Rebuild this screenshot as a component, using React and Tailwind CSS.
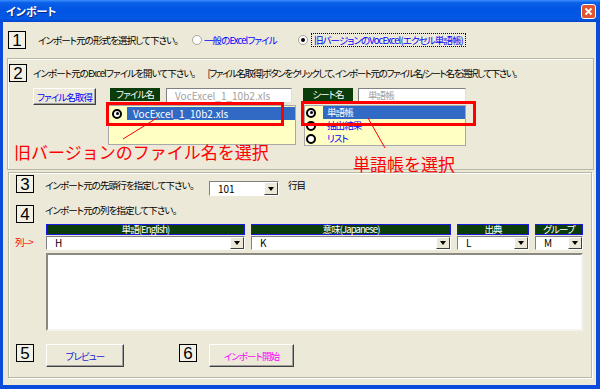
const J = "text-[9.5px] tracking-[-0.9px]";

function Num({ n }) {
  return (
    <div className="w-[18px] h-[18px] shrink-0 border border-black bg-[#f3f1e6] flex items-center justify-center font-['Liberation_Sans',sans-serif] text-[17px] leading-none tracking-normal [font-feature-settings:normal]">
      {n}
    </div>
  );
}

function Radio({ checked }) {
  return (
    <div className="w-[10px] h-[10px] shrink-0 rounded-full bg-white border border-[#a7a69a] flex items-center justify-center">
      {checked && <div className="w-[4px] h-[4px] rounded-full bg-black" />}
    </div>
  );
}

function ListRadio({ checked }) {
  return (
    <div className="w-[10px] h-[10px] shrink-0 rounded-full bg-white border-2 border-black flex items-center justify-center">
      {checked && <div className="w-[3px] h-[3px] rounded-full bg-black" />}
    </div>
  );
}

function DropBtn() {
  return (
    <div className="w-[14px] h-full shrink-0 bg-[#ece9d8] border border-t-white border-l-white border-b-[#404040] border-r-[#404040] flex items-center justify-center">
      <div className="w-0 h-0 border-x-[3px] border-x-transparent border-t-[4px] border-t-black" />
    </div>
  );
}

function Combo({ value, cls }) {
  return (
    <div className={cls}>
      <div className="flex h-full bg-white border border-t-[#808080] border-l-[#808080] border-b-white border-r-white">
        <div className="flex-1 pl-[8px] flex items-center text-[10px] leading-none">{value}</div>
        <DropBtn />
      </div>
    </div>
  );
}

export default function App() {
  return (
    <div className="relative w-[600px] h-[389px] bg-[#0b4bdc] flex flex-col overflow-hidden whitespace-nowrap font-['Noto_Sans_CJK_JP',sans-serif] text-[10px] leading-[14px] text-black [font-feature-settings:'palt']">
      {/* title bar */}
      <div className="h-[22px] shrink-0 flex items-center justify-between pl-[6px] pr-[4px] bg-[linear-gradient(180deg,#3d8ffb_0%,#0b61ea_12%,#0054e3_45%,#0459e4_85%,#0045cc_100%)]">
        <span className="text-white font-bold text-[11px] [text-shadow:1px_1px_0_#0a2a8a]">インポート</span>
        <div className="w-[15px] h-[15px] rounded-[3px] border border-white bg-[#e0552f] flex items-center justify-center">
          <svg width="9" height="9" viewBox="0 0 9 9">
            <path d="M1.5 1.5L7.5 7.5M7.5 1.5L1.5 7.5" stroke="white" strokeWidth="1.8" />
          </svg>
        </div>
      </div>

      {/* body */}
      <div className="flex-1 ml-[3px] mr-[4px] mb-[4px] bg-[#ece9d8] flex flex-col">
        {/* section 1 */}
        <div className="h-[36px] shrink-0 flex items-center pl-[5px]">
          <Num n="1" />
          <span className={`ml-[12px] w-[154px] shrink-0 ${J}`}>インポート元の形式を選択して下さい。</span>
          <Radio />
          <span className={`ml-[2px] w-[94px] shrink-0 text-[#0000ff] ${J}`}>一般のExcelファイル</span>
          <Radio checked />
          <span className={`ml-[3px] border border-dotted border-black px-[2px] leading-[12px] text-[#0000ff] ${J}`}>
            旧バージョンのVocExcel(エクセル単語帳)
          </span>
        </div>

        {/* section 2 */}
        <div className="h-[112px] shrink-0 ml-[4px] mr-[2px] border border-[#b9b6a6] shadow-[inset_1px_1px_0_#fff] flex flex-col pl-[1px] pt-[5px]">
          <div className="flex items-center h-[18px]">
            <Num n="2" />
            <span className={`ml-[6px] ${J}`}>インポート元のExcelファイルを開いて下さい。</span>
            <span className="ml-[12px] text-[9.5px] tracking-[-1.4px]">
              [ファイル名取得]ボタンをクリックして、インポート元のファイル名/シート名を選択して下さい。
            </span>
          </div>
          <div className="flex items-start mt-[6px] pl-[24px]">
            <div className={`w-[63px] h-[17px] shrink-0 bg-[#ece9d8] border border-t-white border-l-white border-b-[#404040] border-r-[#404040] shadow-[inset_-1px_-1px_0_#a0a0a0] flex items-center justify-center text-[#0000ff] ${J}`}>
              ファイル名取得
            </div>
            <div className={`ml-[14px] w-[50px] h-[13px] shrink-0 bg-[#0b3d0b] text-white flex items-center justify-center leading-none ${J}`}>
              ファイル名
            </div>
            <div className="ml-[6px] w-[126px] h-[15px] shrink-0 bg-white border border-t-[#808080] border-l-[#808080] border-b-[#e0e0e0] border-r-[#e0e0e0] pl-[8px] flex items-center text-[#a0a0a0] leading-none">
              VocExcel_1_10b2.xls
            </div>
            <div className={`ml-[11px] w-[50px] h-[13px] shrink-0 bg-[#0b3d0b] text-white flex items-center justify-center leading-none ${J}`}>
              シート名
            </div>
            <div className={`ml-[5px] w-[108px] h-[15px] shrink-0 bg-white border border-t-[#808080] border-l-[#808080] border-b-[#e0e0e0] border-r-[#e0e0e0] pl-[9px] flex items-center text-[#a0a0a0] leading-none ${J}`}>
              単語帳
            </div>
          </div>
          <div className="flex items-start pl-[99px]">
            <div className="w-[188px] h-[40px] shrink-0 bg-[#ffffc4] border border-[#a8a8a8] flex flex-col pt-[1px]">
              <div className="flex items-center h-[13px]">
                <div className="ml-[3px]"><ListRadio checked /></div>
                <div className="ml-[5px] flex-1 h-[13px] bg-[#316ac5] text-white pl-[6px] flex items-center leading-none">
                  VocExcel_1_10b2.xls
                </div>
              </div>
            </div>
            <div className="ml-[8px] w-[162px] h-[41px] shrink-0 bg-[#ffffc4] border border-[#a8a8a8] flex flex-col">
              <div className="flex items-center h-[13px]">
                <div className="ml-[1px]"><ListRadio checked /></div>
                <div className={`ml-[7px] flex-1 h-[13px] bg-[#316ac5] text-white pl-[4px] flex items-center leading-none ${J}`}>単語帳</div>
              </div>
              <div className="flex items-center h-[13px]">
                <div className="ml-[1px]"><ListRadio /></div>
                <div className={`ml-[7px] pl-[4px] text-[#0000ff] leading-none ${J}`}>抽出結果</div>
              </div>
              <div className="flex items-center h-[13px]">
                <div className="ml-[1px]"><ListRadio /></div>
                <div className={`ml-[7px] pl-[4px] text-[#0000ff] leading-none ${J}`}>リスト</div>
              </div>
            </div>
          </div>
        </div>

        {/* section 3 */}
        <div className="mt-[2px] ml-[5px] w-[584px] h-[206px] shrink-0 border border-[#b9b6a6] shadow-[inset_1px_1px_0_#fff,1px_1px_0_#fff] flex flex-col pl-[7px] pt-[2px]">
          <div className="flex items-start h-[30px] shrink-0">
            <Num n="3" />
            <span className={`ml-[11px] w-[164px] shrink-0 mt-[3px] ${J}`}>インポート元の先頭行を指定して下さい。</span>
            <Combo value="101" cls="w-[70px] h-[15px] mt-[6px] shrink-0" />
            <span className={`ml-[9px] mt-[3px] ${J}`}>行目</span>
          </div>
          <div className="flex items-start h-[19px] shrink-0">
            <Num n="4" />
            <span className={`ml-[11px] leading-[12px] -mt-[1px] ${J}`}>インポート元の列を指定して下さい。</span>
          </div>
          <div className="flex ml-[30px] gap-[6px] h-[11px] shrink-0">
            <div className={`w-[199px] h-full bg-[#0b3d0b] border border-[#1a1ae0] text-white flex items-center justify-center leading-none ${J}`}>単語(English)</div>
            <div className={`w-[200px] h-full bg-[#0b3d0b] border border-[#1a1ae0] text-white flex items-center justify-center leading-none ${J}`}>意味(Japanese)</div>
            <div className={`w-[72px] h-full bg-[#0b3d0b] border border-[#1a1ae0] text-white flex items-center justify-center leading-none ${J}`}>出典</div>
            <div className={`w-[48px] h-full bg-[#0b3d0b] border border-[#1a1ae0] text-white flex items-center justify-center leading-none ${J}`}>グループ</div>
          </div>
          <div className="flex items-center mt-[1px] -ml-[1px] h-[14px] shrink-0">
            <span className={`w-[31px] shrink-0 text-[#ff0000] leading-none ${J}`}>列--&gt;</span>
            <div className="flex gap-[6px] h-full">
              <Combo value="H" cls="w-[199px] h-full" />
              <Combo value="K" cls="w-[200px] h-full" />
              <Combo value="L" cls="w-[72px] h-full" />
              <Combo value="M" cls="w-[48px] h-full" />
            </div>
          </div>
          <div className="ml-[30px] mt-[3px] w-[537px] h-[78px] shrink-0 bg-white border-2 border-t-[#8c8a80] border-l-[#8c8a80] border-b-[#f4f3ee] border-r-[#f4f3ee]" />
          <div className="flex items-start mt-[13px] shrink-0">
            <Num n="5" />
            <div className={`ml-[12px] w-[78px] h-[23px] shrink-0 bg-[#ece9d8] border border-t-white border-l-white border-b-[#404040] border-r-[#404040] shadow-[inset_-1px_-1px_0_#a0a0a0] flex items-center justify-center text-[#1a1ad0] ${J}`}>
              プレビュー
            </div>
            <div className="ml-[55px]"><Num n="6" /></div>
            <div className={`ml-[12px] w-[85px] h-[23px] shrink-0 bg-[#ece9d8] border border-t-white border-l-white border-b-[#404040] border-r-[#404040] shadow-[inset_-1px_-1px_0_#a0a0a0] flex items-center justify-center text-[#ff00ff] ${J}`}>
              インポート開始
            </div>
          </div>
        </div>
      </div>

      {/* annotations */}
      <div className="absolute left-[106px] top-[102px] w-[178px] h-[24px] border-[3px] border-[#ff0000]" />
      <div className="absolute left-[301px] top-[101px] w-[175px] h-[25px] border-[3px] border-[#ff0000]" />
      <svg className="absolute left-0 top-0 pointer-events-none" width="600" height="389">
        <line x1="157" y1="118" x2="123" y2="139" stroke="#ff0000" strokeWidth="1" />
        <line x1="368" y1="118" x2="385" y2="148" stroke="#ff0000" strokeWidth="1" />
      </svg>
      <div className="absolute left-[14px] top-[142px] text-[17px] leading-[20px] text-[#ff0000] [font-feature-settings:normal]">
        旧バージョンのファイル名を選択
      </div>
      <div className="absolute left-[353px] top-[154px] text-[17px] leading-[20px] text-[#ff0000] [font-feature-settings:normal]">
        単語帳を選択
      </div>
    </div>
  );
}
